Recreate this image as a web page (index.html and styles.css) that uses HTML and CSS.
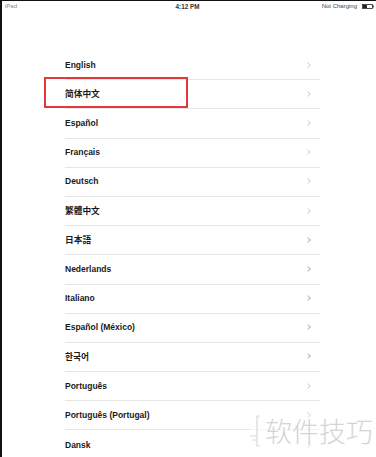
FILE: index.html
```html
<!DOCTYPE html>
<html>
<head>
<meta charset="utf-8">
<link rel="stylesheet" href="styles.css">
</head>
<body>
<div class="screen">
  <div class="status">
    <span class="carrier">iPad</span>
    <span class="time">4:12 PM</span>
    <span class="power">Not Charging
      <svg class="battery" width="12" height="5" viewBox="0 0 12 5"><rect x="0.5" y="0.5" width="10" height="4" fill="none" stroke="#222" stroke-width="0.8"/><rect x="1" y="1" width="4" height="3" fill="#222"/><rect x="10.8" y="1.6" width="1" height="1.8" fill="#222"/></svg>
    </span>
  </div>
  <ul class="langs">
    <li class="row"><span>English</span><svg class="chev" width="4" height="6" viewBox="0 0 4 6"><polyline points="0.6,0.5 3.2,3 0.6,5.5" fill="none" stroke="#b8b8b8" stroke-width="0.8"/></svg></li>
    <li class="row"><span class="cjk">简体中文</span><svg class="chev" width="4" height="6" viewBox="0 0 4 6"><polyline points="0.6,0.5 3.2,3 0.6,5.5" fill="none" stroke="#b8b8b8" stroke-width="0.8"/></svg></li>
    <li class="row"><span>Español</span><svg class="chev" width="4" height="6" viewBox="0 0 4 6"><polyline points="0.6,0.5 3.2,3 0.6,5.5" fill="none" stroke="#b8b8b8" stroke-width="0.8"/></svg></li>
    <li class="row"><span>Français</span><svg class="chev" width="4" height="6" viewBox="0 0 4 6"><polyline points="0.6,0.5 3.2,3 0.6,5.5" fill="none" stroke="#b8b8b8" stroke-width="0.8"/></svg></li>
    <li class="row"><span>Deutsch</span><svg class="chev" width="4" height="6" viewBox="0 0 4 6"><polyline points="0.6,0.5 3.2,3 0.6,5.5" fill="none" stroke="#b8b8b8" stroke-width="0.8"/></svg></li>
    <li class="row"><span class="cjk">繁體中文</span><svg class="chev" width="4" height="6" viewBox="0 0 4 6"><polyline points="0.6,0.5 3.2,3 0.6,5.5" fill="none" stroke="#b8b8b8" stroke-width="0.8"/></svg></li>
    <li class="row"><span class="cjk jp">日本語</span></li>
    <li class="row"><span>Nederlands</span></li>
    <li class="row"><span>Italiano</span></li>
    <li class="row"><span>Español (México)</span></li>
    <li class="row"><span class="cjk kr">한국어</span></li>
    <li class="row"><span>Português</span><svg class="chev" width="4" height="6" viewBox="0 0 4 6"><polyline points="0.6,0.5 3.2,3 0.6,5.5" fill="none" stroke="#b8b8b8" stroke-width="0.8"/></svg></li>
    <li class="row"><span>Português (Portugal)</span></li>
    <li class="row"><span>Dansk</span></li>
  </ul>
  <div class="highlight"></div>
  <div class="watermark">
    <svg class="wm-logo" width="12" height="34" viewBox="0 0 12 34"><path d="M7 2 H10 M7 2 V32 H10 M0 22 H7 M2 26 H7" fill="none" stroke="#d8d8d8" stroke-width="1.2"/></svg>
    <span class="wm-text">软件技巧</span>
  </div>
</div>
</body>
</html>
```
FILE: styles.css
```css
html, body {
  margin: 0;
  padding: 0;
  background: #fff;
}
.screen {
  position: relative;
  width: 374px;
  height: 456px;
  border-top: 1px solid #111;
  border-left: 2px solid #111;
  overflow: hidden;
  font-family: "Liberation Sans", Arial, "Noto Sans CJK SC", sans-serif;
}
.status {
  display: flex;
  align-items: center;
  justify-content: space-between;
  height: 10px;
  padding: 0 2px 0 3px;
  font-size: 6px;
  color: #666;
}
.carrier {
  width: 60px;
  color: #888;
}
.time {
  font-weight: bold;
  color: #333;
  font-size: 6.3px;
  margin-left: 56px;
}
.power {
  width: 120px;
  display: flex;
  justify-content: flex-end;
  align-items: center;
  gap: 5px;
  color: #444;
}
.langs {
  list-style: none;
  margin: 40px 56px 0 63px;
  padding: 0;
}
.row {
  box-sizing: border-box;
  height: 29.2px;
  display: flex;
  align-items: center;
  justify-content: space-between;
  padding: 0 9px 1px 0;
  border-bottom: 1px solid #e6e6e6;
  font-size: 8.5px;
  font-weight: bold;
  color: #1a1a1a;
}
.row:last-child {
  border-bottom: none;
}
.cjk {
  font-family: "Noto Sans CJK SC", sans-serif;
  font-weight: 600;
  font-size: 8.7px;
}
.cjk.jp {
  font-family: "Noto Sans CJK JP", sans-serif;
}
.cjk.kr {
  font-family: "Noto Sans CJK KR", sans-serif;
}
.chev {
  display: block;
}
.row:nth-child(7)::after,
.row:nth-child(8)::after,
.row:nth-child(9)::after,
.row:nth-child(10)::after,
.row:nth-child(11)::after,
.row:nth-child(13)::after,
.row:nth-child(14)::after {
  content: "";
  width: 3px;
  height: 3px;
  border-top: 0.8px solid #b8b8b8;
  border-right: 0.8px solid #b8b8b8;
  transform: rotate(45deg);
  margin-right: 1px;
}
.highlight {
  position: absolute;
  left: 42px;
  top: 76px;
  width: 140px;
  height: 27px;
  border: 2.5px solid #e2393b;
}
.watermark {
  position: absolute;
  left: 248px;
  top: 412px;
  display: flex;
  align-items: center;
  gap: 3px;
  background: rgba(255,255,255,0.6);
}
.wm-text {
  font-family: "Noto Sans CJK SC", sans-serif;
  font-weight: 300;
  font-size: 27px;
  color: #d4d4d4;
  line-height: 36px;
}
```
